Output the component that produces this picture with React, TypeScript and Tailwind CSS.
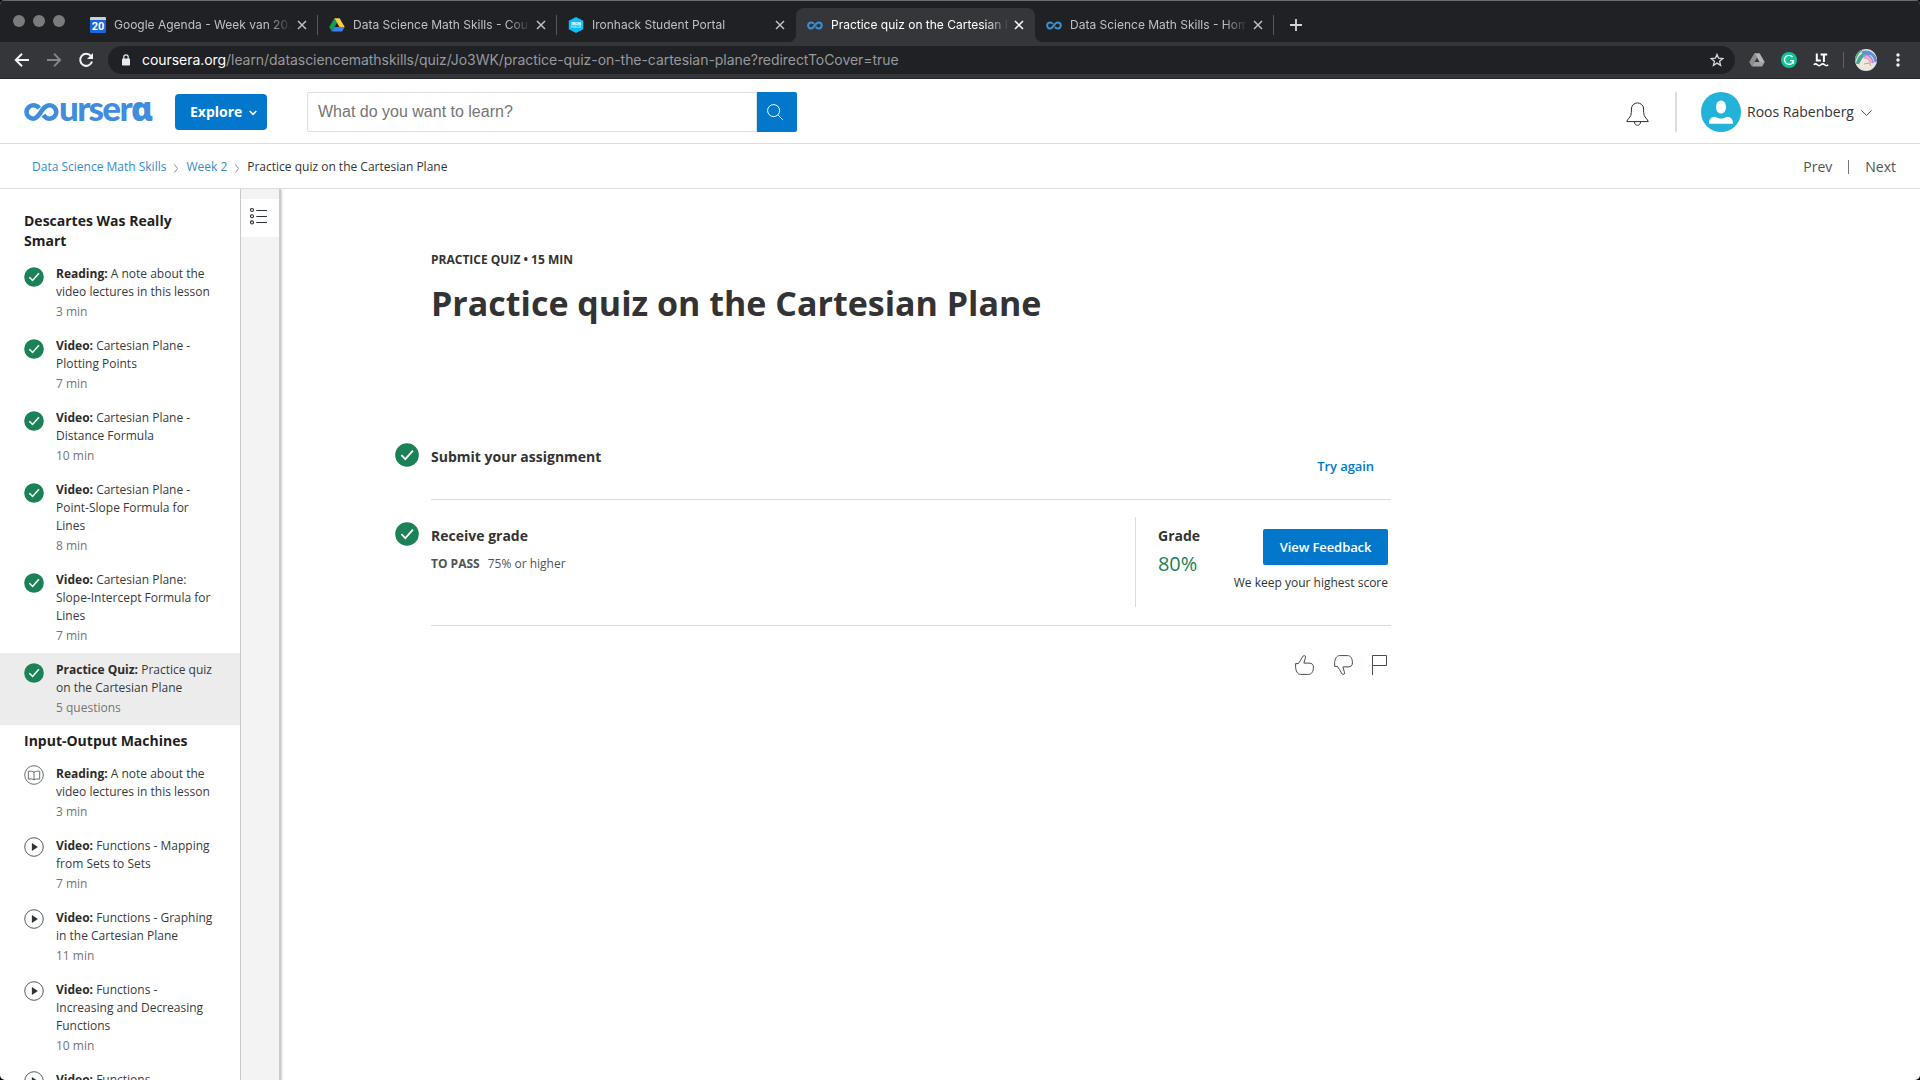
import React from "react";

/* ---------- Icons ---------- */

function Infinity({ className, stroke = 4.6 }: { className: string; stroke?: number }) {
  return (
    <svg className={className} viewBox="0 0 35 18" fill="none" stroke="currentColor" strokeWidth={stroke}>
      <path d="M15.2 5.2C13.6 3.2 11.5 2.3 9.2 2.3A6.7 6.7 0 0 0 9.2 15.7C16.5 15.7 17.2 2.3 25.6 2.3A6.7 6.7 0 0 1 25.6 15.7C22.8 15.7 20.8 14.2 19.4 12" />
    </svg>
  );
}

function CalendarIcon() {
  return (
    <div className="flex h-4 w-4 flex-col overflow-hidden rounded-[1px]">
      <div className="h-[3px] bg-[#cfcfcf]" />
      <div className="flex flex-1 items-center justify-center bg-[#1a66dd] font-[Roboto] text-[11px] leading-[13px] font-bold text-white">
        20
      </div>
    </div>
  );
}

function DriveIcon({ gray = false }: { gray?: boolean }) {
  const [a, b, c] = gray ? ["#8f8f8f", "#b5b5b5", "#a3a3a3"] : ["#0f9d58", "#ffcd40", "#3d7ff0"];
  return (
    <svg className="h-4 w-4" viewBox="0 0 16 16">
      <path d="M5.4 1.2 8 5.7 2.9 14.6 0.2 10z" fill={a} />
      <path d="M5.4 1.2h5.2l5.1 8.9h-5.2z" fill={b} />
      <path d="M5.5 10.1h10.2l-2.6 4.5H2.9z" fill={c} />
    </svg>
  );
}

function IronhackIcon() {
  return (
    <svg className="h-4 w-4" viewBox="0 0 16 16">
      <path d="M8 0 15.2 3.8v8.4L8 16 .8 12.2V3.8z" fill="#0cc0f5" />
      <text x="8" y="7.6" fontSize="4" fontWeight="900" fontFamily="Roboto" fill="#fff" textAnchor="middle">IRON</text>
      <text x="8" y="11.4" fontSize="4" fontWeight="700" fontFamily="Roboto" fill="#a8e8fb" textAnchor="middle">HACK</text>
    </svg>
  );
}

function CloseIcon() {
  return (
    <svg className="h-[10px] w-[10px] shrink-0" viewBox="0 0 10 10" stroke="currentColor" strokeWidth="1.5">
      <path d="M1 1l8 8M9 1L1 9" />
    </svg>
  );
}

function CheckCircle({ className }: { className: string }) {
  return (
    <svg className={className} viewBox="0 0 24 24" fill="none">
      <circle cx="12" cy="12" r="11.8" fill="#1b8156" />
      <path d="M6.4 12.2 10.3 16.2 17.9 7.6" stroke="#fff" strokeWidth="1.8" />
    </svg>
  );
}

function PlayCircle() {
  return (
    <svg className="-mt-[2px] h-5 w-5" viewBox="0 0 20 20" fill="none">
      <circle cx="10" cy="10" r="9.3" stroke="#40474d" strokeWidth="0.9" />
      <path d="M7.9 6v8l6-4z" fill="#2c3338" />
    </svg>
  );
}

function BookCircle() {
  return (
    <svg className="-mt-[2px] h-5 w-5" viewBox="0 0 20 20" fill="none" stroke="#565d63" strokeWidth="0.9">
      <circle cx="10" cy="10" r="9.3" />
      <path d="M10 7.2C8.6 6.2 6.4 6.1 4.3 6.3v7.8C6.6 13.8 8.8 14 10 14.8 11.2 14 13.4 13.8 15.7 14.1V6.3C13.6 6.1 11.4 6.2 10 7.2zV14.8" />
    </svg>
  );
}

function ThumbUp({ className }: { className: string }) {
  return (
    <svg className={className} viewBox="0 0 19 20" fill="none" stroke="#454c54" strokeWidth="1">
      <path d="M.6 8.6H3.4C5 6.4 6.2 4.2 7.4 2 8.4.3 9.6.3 10.3 1 11 2 9.6 5.4 8.9 8.1H14C17 8.2 18.4 9.4 18.4 12 18.4 16.6 16.6 19.4 13.6 19.4H5.6C2.4 19.4.8 15.8.6 12.2z" />
    </svg>
  );
}

/* ---------- Browser chrome ---------- */

type TabData = { icon: React.ReactNode; title: string; active?: boolean; divider?: boolean };

const tabs: TabData[] = [
  { icon: <CalendarIcon />, title: "Google Agenda - Week van 20.", divider: true },
  { icon: <DriveIcon />, title: "Data Science Math Skills - Coursera", divider: true },
  { icon: <IronhackIcon />, title: "Ironhack Student Portal" },
  { icon: <Infinity className="h-[9px] w-4 text-[#3b8fd0]" stroke={4.4} />, title: "Practice quiz on the Cartesian Plane", active: true },
  { icon: <Infinity className="h-[9px] w-4 text-[#3b8fd0]" stroke={4.4} />, title: "Data Science Math Skills - Home", divider: true },
];

function TabStrip() {
  return (
    <div className="flex h-[42px] items-end border-t border-[#6b6d70] bg-[#202124] font-[Inter,sans-serif]">
      <div className="mb-[15px] flex w-[79px] gap-2 pl-[13px]">
        <i className="h-3 w-3 rounded-full bg-[#7a7b7d]" />
        <i className="h-3 w-3 rounded-full bg-[#7a7b7d]" />
        <i className="h-3 w-3 rounded-full bg-[#7a7b7d]" />
      </div>
      {tabs.map((t, i) => (
        <div
          key={i}
          className={
            t.active
              ? "relative flex h-[34px] w-[239px] items-center rounded-t-lg bg-[#35363a] pl-[11px] text-white"
              : "relative flex h-[34px] w-[239px] items-center pl-[11px] text-[#bdc1c6]"
          }
        >
          {t.active && (
            <>
              <i className="absolute bottom-0 -left-2 h-2 w-2 bg-[radial-gradient(circle_at_0_0,#202124_8px,#35363a_8.5px)]" />
              <i className="absolute -right-2 bottom-0 h-2 w-2 bg-[radial-gradient(circle_at_100%_0,#202124_8px,#35363a_8.5px)]" />
            </>
          )}
          {t.icon}
          <span className="ml-2 w-[176px] overflow-hidden text-xs whitespace-nowrap [mask-image:linear-gradient(to_right,#000_154px,transparent_178px)]">
            {t.title}
          </span>
          <span className="ml-[7px]">
            <CloseIcon />
          </span>
          {t.divider && <i className="absolute top-[7px] right-0 h-5 w-px bg-[#55575b]" />}
        </div>
      ))}
      <svg className="mb-[11px] ml-4 h-3 w-3" viewBox="0 0 12 12" stroke="#d3d5d8" strokeWidth="1.8">
        <path d="M6 0v12M0 6h12" />
      </svg>
    </div>
  );
}

function Toolbar() {
  return (
    <div className="flex h-[37px] items-center border-b border-[#28292c] bg-[#35363a] font-[Inter,sans-serif]">
      <svg className="ml-[14px] h-4 w-4" viewBox="0 0 16 16" fill="none" stroke="#f1f3f4" strokeWidth="2">
        <path d="M15 8H2M8 1.7 1.8 8 8 14.3" />
      </svg>
      <svg className="ml-4 h-4 w-4" viewBox="0 0 16 16" fill="none" stroke="#85878a" strokeWidth="1.8">
        <path d="M1 8h13M8 1.7 14.2 8 8 14.3" />
      </svg>
      <svg className="ml-4 h-4 w-4" viewBox="0 0 16 16" fill="none" stroke="#f1f3f4" strokeWidth="2">
        <path d="M13 4.2A6 6 0 1 0 14 9.5" />
        <path d="M15 1v6H9z" fill="#f1f3f4" stroke="none" />
      </svg>
      <div className="ml-[14px] flex h-7 w-[1627px] items-center rounded-full bg-[#202124] pr-[11px] pl-[14px]">
        <svg className="h-3 w-2" viewBox="0 0 8 12">
          <rect x="0" y="4.6" width="8" height="7" rx=".8" fill="#e8eaed" />
          <path d="M1.8 5V3a2.2 2.2 0 0 1 4.4 0v2" fill="none" stroke="#e8eaed" strokeWidth="1.2" />
        </svg>
        <div className="ml-3 flex-1 text-sm tracking-[-0.053px] text-[#96999d]">
          <span className="text-white">coursera.org</span>
          /learn/datasciencemathskills/quiz/Jo3WK/practice-quiz-on-the-cartesian-plane?redirectToCover=true
        </div>
        <svg className="h-[14px] w-[14px]" viewBox="0 0 14 14" fill="none" stroke="#d5d7da" strokeWidth="1.3">
          <path d="M7 1.4 8.6 5.2l4.2.4-3.2 2.7 1 4L7 10.1l-3.6 2.2 1-4L1.2 5.6l4.2-.4z" />
        </svg>
      </div>
      <div className="ml-[14px]">
        <DriveIcon gray />
      </div>
      <div className="ml-4 flex h-4 w-4 items-center justify-center rounded-full bg-[#11c39a]">
        <svg className="h-3 w-3" viewBox="0 0 12 12" fill="none" stroke="#fff" strokeWidth="1.3">
          <path d="M9.6 3.2A4.5 4.5 0 1 0 10.4 6.6H7M10.3 6.4v3.4" />
        </svg>
      </div>
      <svg className="ml-4 h-4 w-4" viewBox="0 0 16 16" fill="none" stroke="#fff" strokeWidth="2">
        <path d="M3.8 1.6v7h4M7.6 2.6h6.6M10.9 2.6V10" />
        <path d="M.8 12.8q1.8-1.8 3.6 0t3.6 0 3.6 0 3.6 0" strokeWidth="1.6" />
      </svg>
      <i className="ml-[14px] h-4 w-px bg-[#606266]" />
      <svg className="ml-[11px] h-[22px] w-[22px]" viewBox="0 0 22 22" fill="none">
        <clipPath id="profile">
          <circle cx="11" cy="11" r="11" />
        </clipPath>
        <g clipPath="url(#profile)">
          <rect width="22" height="22" fill="#e6e5e2" />
          <path d="M0 14C2 6 6 1 12-1L4-2-2 4z" fill="#49a584" />
          <path d="M3 15C4 8 9 4 15 5" stroke="#3fa98f" strokeWidth="4" />
          <path d="M7 4C14 1 20 6 21 13" stroke="#5f8fe0" strokeWidth="3" />
          <path d="M8 7C13 5 17 8 18 14" stroke="#b58be0" strokeWidth="2" />
          <path d="M9 9C13 8 15 11 16 15" stroke="#eda3b2" strokeWidth="2" />
          <path d="M4 15 8 8.500 11 13l6 1.500-2 3.500H7z" fill="#f1e7dc" />
          <path d="M9 15l5-1 2 3" stroke="#b98f6c" strokeWidth=".8" />
        </g>
      </svg>
      <svg className="ml-[19px] h-[14px] w-1" viewBox="0 0 4 14" fill="#f1f3f4">
        <circle cx="2" cy="2" r="1.7" />
        <circle cx="2" cy="7" r="1.7" />
        <circle cx="2" cy="12" r="1.7" />
      </svg>
    </div>
  );
}

/* ---------- Site header ---------- */

function Logo() {
  return (
    <div className="flex h-[18px] w-[128px] items-center text-[#3f8ddc]" aria-label="coursera">
      <Infinity className="h-[18px] w-[35px] shrink-0" />
      <span className="-mt-[9px] font-[Lato] text-[35px] leading-[18px] font-black tracking-[-1.7px]">
        urser<span className="font-['Noto_Sans'] text-[33px]">ɑ</span>
      </span>
    </div>
  );
}

function Header() {
  return (
    <header className="h-[65px] border-b border-[#dedede] pt-[13px]">
      <div className="flex h-10 items-center pl-6">
        <Logo />
        <button className="ml-[23px] flex h-9 w-[92px] items-center rounded-sm bg-[#0277cc] pl-[15px] text-sm font-bold text-white">
          Explore
          <svg className="mt-px ml-[7px] h-2 w-2" viewBox="0 0 8 8" fill="none" stroke="currentColor" strokeWidth="1.6">
            <path d="M.7 2 4 5.4 7.3 2" />
          </svg>
        </button>
        <div className="ml-10 flex h-10 w-[450px] items-center rounded-l-xs border border-[#dedede] pl-[10px] font-['Liberation_Sans',sans-serif] text-base text-[#757575]">
          What do you want to learn?
        </div>
        <div className="flex h-10 w-10 items-center rounded-r-xs bg-[#0277cc] pl-[10px]">
          <svg className="-mt-px h-4 w-4" viewBox="0 0 16 16" fill="none" stroke="#fff" strokeWidth="1">
            <circle cx="6.6" cy="6.6" r="6" />
            <path d="M11 11l4.8 4.8" />
          </svg>
        </div>
        <svg className="mt-1 ml-auto h-6 w-[23px]" viewBox="0 0 23 24" fill="none" stroke="#2b3036" strokeWidth="1">
          <path d="M.8 19.6C.8 17.4 5.4 15.4 5.4 10.4V7A6.1 6.1 0 0 1 17.6 7V10.4C17.6 15.4 22.2 17.4 22.2 19.6z" />
          <path d="M8.4 19.8C8.6 24.4 14.4 24.4 14.6 19.8" />
        </svg>
        <i className="ml-[26px] h-10 w-[2px] bg-[#dcdcdc]" />
        <svg className="ml-6 h-10 w-10" viewBox="0 0 40 40">
          <circle cx="20" cy="20" r="20" fill="#23b2da" />
          <ellipse cx="20" cy="15" rx="5" ry="6.6" fill="#fff" />
          <path d="M8 31.8c0-5 2.2-6.8 6-7 4 2.4 8 2.4 12 0 3.8.2 6 2 6 7z" fill="#fff" />
        </svg>
        <span className="ml-[6px] w-[107px] text-sm whitespace-nowrap text-[#333]">Roos Rabenberg</span>
        <svg className="mt-px mr-[48px] ml-[7px] h-3 w-[11px]" viewBox="0 0 11 12" fill="none" stroke="#4a4f55">
          <path d="M.4 3.4 5.5 8.4 10.6 3.4" />
        </svg>
      </div>
    </header>
  );
}

function Crumb() {
  return (
    <svg className="mx-2 mt-[2px] h-[9px] w-1" viewBox="0 0 4 9" fill="none" stroke="#808080" strokeWidth=".9">
      <path d="M.3.4 3.6 4.500 .3 8.600" />
    </svg>
  );
}

function Breadcrumbs() {
  return (
    <nav className="flex h-[45px] items-center border-b border-[#dedede] pt-[2px] pr-6 pl-8 text-xs text-[#333]">
      <span className="text-[#338ccd]">Data Science Math Skills</span>
      <Crumb />
      <span className="text-[#338ccd]">Week 2</span>
      <Crumb />
      <span>Practice quiz on the Cartesian Plane</span>
      <span className="ml-auto text-sm text-[#525252]">Prev</span>
      <i className="mx-4 h-[14px] w-px bg-[#757575]" />
      <span className="text-sm text-[#525252]">Next</span>
    </nav>
  );
}

/* ---------- Lesson list ---------- */

type Item = { kind: string; lines: string[]; meta: string; icon: "check" | "play" | "book"; active?: boolean };

const lessonOne: Item[] = [
  { kind: "Reading:", lines: ["A note about the", "video lectures in this lesson"], meta: "3 min", icon: "check" },
  { kind: "Video:", lines: ["Cartesian Plane -", "Plotting Points"], meta: "7 min", icon: "check" },
  { kind: "Video:", lines: ["Cartesian Plane -", "Distance Formula"], meta: "10 min", icon: "check" },
  { kind: "Video:", lines: ["Cartesian Plane -", "Point-Slope Formula for", "Lines"], meta: "8 min", icon: "check" },
  { kind: "Video:", lines: ["Cartesian Plane:", "Slope-Intercept Formula for", "Lines"], meta: "7 min", icon: "check" },
  { kind: "Practice Quiz:", lines: ["Practice quiz", "on the Cartesian Plane"], meta: "5 questions", icon: "check", active: true },
];

const lessonTwo: Item[] = [
  { kind: "Reading:", lines: ["A note about the", "video lectures in this lesson"], meta: "3 min", icon: "book" },
  { kind: "Video:", lines: ["Functions - Mapping", "from Sets to Sets"], meta: "7 min", icon: "play" },
  { kind: "Video:", lines: ["Functions - Graphing", "in the Cartesian Plane"], meta: "11 min", icon: "play" },
  { kind: "Video:", lines: ["Functions -", "Increasing and Decreasing", "Functions"], meta: "10 min", icon: "play" },
  { kind: "Video:", lines: ["Functions"], meta: "", icon: "play" },
];

function LessonItem({ item }: { item: Item }) {
  return (
    <li className={item.active ? "flex bg-[#ececec] py-2 pl-6" : "flex py-2 pl-6"}>
      <div className="mt-[2px] mr-3 h-5 w-5 shrink-0">
        {item.icon === "check" && <CheckCircle className="h-5 w-5" />}
        {item.icon === "play" && <PlayCircle />}
        {item.icon === "book" && <BookCircle />}
      </div>
      <div className="text-xs leading-[18px] whitespace-nowrap text-[#373a3c]">
        {item.lines.map((line, i) => (
          <div key={i}>
            {i === 0 && <b className="text-[#2b2b2b]">{item.kind} </b>}
            {line}
          </div>
        ))}
        <div className="mt-[2px] text-[#757575]">{item.meta}</div>
      </div>
    </li>
  );
}

function Lesson({ title, items }: { title: React.ReactNode; items: Item[] }) {
  return (
    <section>
      <h2 className="py-[6px] pl-6 text-sm leading-5 font-bold text-[#1f1f1f]">{title}</h2>
      <ul>
        {items.map((item, i) => (
          <LessonItem key={i} item={item} />
        ))}
      </ul>
    </section>
  );
}

function Sidebar() {
  return (
    <aside className="flex shrink-0">
      <div className="h-full w-[241px] overflow-hidden border-r border-[#c8c8c8] pt-4">
        <Lesson title={<>Descartes Was Really<br />Smart</>} items={lessonOne} />
        <Lesson title="Input-Output Machines" items={lessonTwo} />
      </div>
      <div className="h-full w-[38px] bg-[#f3f3f3] pt-[10px] shadow-[2px_0_0_#cacaca,3px_1px_2px_#d0d0d0]">
        <div className="flex h-[38px] items-center bg-white pl-[9px]">
          <svg className="-mt-1 h-[18px] w-[18px]" viewBox="0 0 18 18" fill="none" stroke="#2d3238" strokeWidth="1.1">
            <circle cx="2" cy="3" r="1.5" />
            <circle cx="2" cy="9.2" r="1.5" />
            <circle cx="2" cy="15.4" r="1.5" />
            <path d="M6.3 3.5H17M6.3 9.5H17M6.3 15.5H17" strokeWidth="1" />
          </svg>
        </div>
      </div>
    </aside>
  );
}

/* ---------- Quiz overview ---------- */

function Quiz() {
  return (
    <main className="flex-1 pt-[61px] pl-[152px] text-[#333]">
      <div className="w-[960px]">
        <p className="text-xs leading-5 font-bold">PRACTICE QUIZ • 15 MIN</p>
        <h1 className="mt-[9px] text-[34px] leading-[48px] font-bold whitespace-nowrap">
          Practice quiz on the Cartesian Plane
        </h1>

        <section className="mt-[116px] flex h-[57px] border-b border-[#dcdcdc]">
          <CheckCircle className="mr-3 -ml-9 h-6 w-6 shrink-0" />
          <h3 className="mt-1 text-sm leading-5 font-bold">Submit your assignment</h3>
          <a className="mt-[13px] mr-[17px] ml-auto text-[13px] leading-5 font-semibold tracking-[-0.08px] text-[#0277cc]">Try again</a>
        </section>

        <section className="flex h-[126px] border-b border-[#dcdcdc] pt-[17px]">
          <CheckCircle className="mt-[5px] mr-3 -ml-9 h-6 w-6 shrink-0" />
          <div className="pt-[9px]">
            <h3 className="text-sm leading-5 font-bold">Receive grade</h3>
            <p className="mt-2 text-xs leading-5 text-[#525252]">
              <b className="mr-2">TO PASS</b>75% or higher
            </p>
          </div>
          <div className="ml-auto flex h-[90px] w-[256px] border-l border-[#dcdcdc] pr-[3px] pl-[22px]">
            <div className="pt-[9px]">
              <h3 className="text-sm leading-5 font-bold">Grade</h3>
              <p className="mt-[6px] text-xl leading-6 tracking-[-0.1px] text-[#1b8156]">80%</p>
            </div>
            <div className="ml-auto flex flex-col items-end pt-3">
              <button className="h-9 w-[125px] rounded-xs bg-[#0277cc] pt-[2px] text-[13px] font-semibold tracking-[-0.08px] text-white">
                View Feedback
              </button>
              <p className="mt-2 text-xs leading-5 whitespace-nowrap">We keep your highest score</p>
            </div>
          </div>
        </section>

        <div className="mt-[29px] flex justify-end pr-1">
          <ThumbUp className="h-5 w-[19px]" />
          <ThumbUp className="ml-5 h-5 w-[19px] -scale-y-100" />
          <svg className="ml-[19px] h-5 w-[15px]" viewBox="0 0 15 20" fill="none" stroke="#454c54">
            <path d="M.5 20V.5H14.5V10.5H.5" />
          </svg>
        </div>
      </div>
    </main>
  );
}

export default function App() {
  return (
    <div className="h-[1080px] w-[1920px] overflow-hidden bg-black">
      <div className="flex h-full flex-col overflow-hidden rounded-[5px] bg-white font-['Open_Sans',sans-serif]">
        <TabStrip />
        <Toolbar />
        <Header />
        <Breadcrumbs />
        <div className="flex min-h-0 flex-1">
          <Sidebar />
          <Quiz />
        </div>
      </div>
    </div>
  );
}
